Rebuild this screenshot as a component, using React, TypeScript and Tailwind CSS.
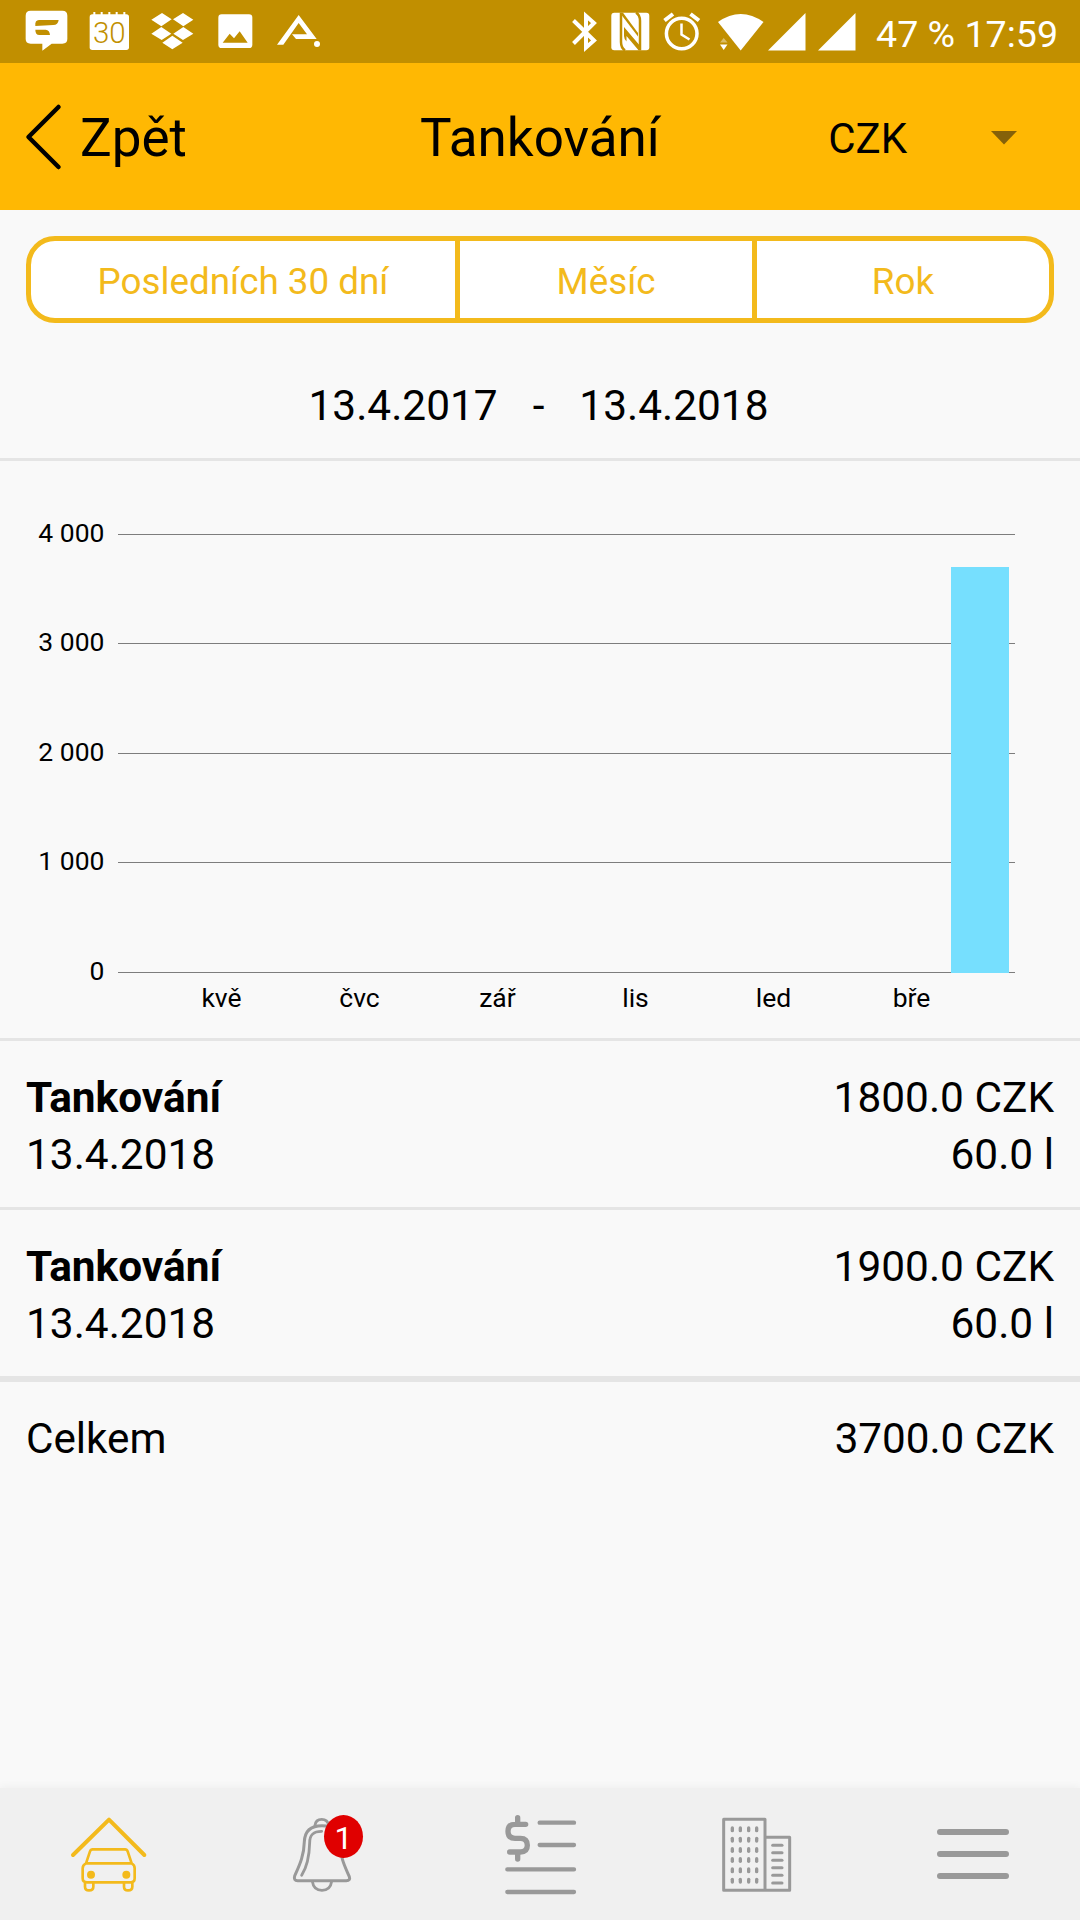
import type { ReactNode } from "react";
import clsx from "clsx";

interface Refuel {
  id: number;
  title: string;
  date: string;
  price: string;
  amount: string;
}

const REFUELS: Refuel[] = [
  { id: 1, title: "Tankování", date: "13.4.2018", price: "1800.0 CZK", amount: "60.0 l" },
  { id: 2, title: "Tankování", date: "13.4.2018", price: "1900.0 CZK", amount: "60.0 l" },
];

const RANGES = [
  { label: "Posledních 30 dní", className: "w-[429px] border-r-5" },
  { label: "Měsíc", className: "w-[297px] border-r-5" },
  { label: "Rok", className: "flex-1" },
];

const Y_TICKS = [
  { label: "4 000", y: 73 },
  { label: "3 000", y: 182 },
  { label: "2 000", y: 292 },
  { label: "1 000", y: 401 },
  { label: "0", y: 511 },
];

// one column per month, every second one is labelled
const MONTHS = ["", "kvě", "", "čvc", "", "zář", "", "lis", "", "led", "", "bře", ""];
const VALUES = [0, 0, 0, 0, 0, 0, 0, 0, 0, 0, 0, 0, 3700];

const PLOT_LEFT = 118;
const PLOT_BOTTOM = 512;
const COL_WIDTH = 69;

function StatusBar() {
  return (
    <div className="flex h-[63px] items-center bg-[#c18f00] pl-[25px] pr-[22px] text-white">
      <div className="flex gap-[21px]">
        {/* Message */}
        <svg className="h-[63px] w-[43px]" viewBox="75 0 129 189" fill="currentColor">
          <path d="M92 32H187Q202 32 202 47V117Q202 131 187 131H155L127 152V131H92Q77 131 77 117V47Q77 32 92 32Z" />
          <path d="M117 60H176Q174 75 160 75L106 78Q104 60 117 60ZM106 89H137Q149 90 150 105H118Q106 105 106 89Z" fill="#c18f00" />
        </svg>
        {/* Calendar */}
        <svg className="h-[63px] w-[41px]" viewBox="267 0 123 189" fill="currentColor">
          <path d="M277 43H379Q387 43 387 51V142Q387 150 379 150H277Q269 150 269 142V51Q269 43 277 43Z" />
          <path d="M283 36V46M305 36V46M328 36V46M350 36V46M373 36V46" stroke="currentColor" strokeWidth="6" />
          <text x="328" y="130" textAnchor="middle" fontSize="87" fontWeight="300" textLength="98" lengthAdjust="spacingAndGlyphs" fill="#c18f00" className="font-['Roboto',sans-serif]">
            30
          </text>
        </svg>
        {/* Dropbox */}
        <svg className="h-[63px] w-[43px]" viewBox="453 0 129 189" fill="currentColor">
          <path d="M486 39L515 58L484 79L454 59ZM549 39L580 59L550 79L519 58ZM484 81L514 101L485 120L454 101ZM550 81L580 101L549 120L520 101ZM517 107L548 128L517 148L487 128Z" />
        </svg>
        {/* Picture */}
        <svg className="h-[63px] w-[40px]" viewBox="645 0 120 189" fill="currentColor">
          <rect x="655" y="43" width="102" height="101" rx="10" />
          <path d="M668 128L689 101L702 115L719 94L743 128Z" fill="#c18f00" />
        </svg>
        <svg className="h-[63px] w-[45px]" viewBox="828 0 135 189" fill="currentColor">
          <path d="M896 45L950 117H888L876 103H921L896 69L850 134H831Z" />
          <circle cx="951" cy="132" r="9" />
        </svg>
      </div>

      <div className="ml-auto flex items-center">
        {/* Bluetooth */}
        <svg className="h-[63px] w-[27px]" viewBox="571 0 27 63" fill="none" stroke="currentColor" strokeWidth="4">
          <path d="M573.5 20.5L594 40.500L586 47.500V16L594 23L573.5 43.500" />
        </svg>
        {/* NFC */}
        <svg className="ml-[13px] h-[63px] w-[39px]" viewBox="611 0 39 63">
          <rect x="611.3" y="12.700" width="38" height="37.600" rx="3" fill="currentColor" />
          <path d="M621 12.700V42Q621 48 625 50.300M636 12.700Q640 15 640 21V50.300" fill="none" stroke="#c18f00" strokeWidth="2.500" />
          <path d="M619.800 12.700H623L638 33V36.500Z" fill="#c18f00" />
          <path d="M624 27L641 47V50.300H638.500L626.500 36V41.500Q624 39 624 36Z" fill="#c18f00" />
        </svg>
        {/* Alarm */}
        <svg className="ml-[13px] h-[63px] w-[38px]" viewBox="663 0 38 63" fill="none" stroke="currentColor">
          <circle cx="681.700" cy="33.500" r="15.300" strokeWidth="3.500" />
          <path d="M664.500 20.500L673 14M699 20.500L690.500 14" strokeWidth="4" />
          <path d="M681.500 23.500V34.500L689.500 39.500" strokeWidth="2.500" />
        </svg>
        {/* Wi-Fi */}
        <svg className="ml-[16px] h-[63px] w-[47px]" viewBox="717 0 47 63" fill="currentColor">
          <path d="M718 22Q740.700 6 763.500 22L740.700 50.500Z" />
          <path d="M720 44.500H727.500L723.700 50Z" />
          <path d="M720 42.500H727.500L723.700 38Z" opacity="0.4" />
        </svg>
        {/* Signal, both SIM slots */}
        <svg className="ml-[4px] h-[63px] w-[38px]" viewBox="768 0 38 63" fill="currentColor">
          <path d="M768 50.500L805.500 13V50.500Z" />
        </svg>
        <svg className="ml-[12px] h-[63px] w-[38px]" viewBox="818 0 38 63" fill="currentColor">
          <path d="M818 50.500L855.500 13V50.500Z" />
        </svg>
        <span className="ml-[20px] pt-[4px] text-[37.6px] leading-[60px]">47 % 17:59</span>
      </div>
    </div>
  );
}

function Header() {
  return (
    <header className="grid h-[147px] grid-cols-[1fr_auto_1fr] items-center bg-[#ffb803] pt-[5px] text-black">
      <div className="flex items-center">
        <svg className="ml-[24px] h-[72px] w-[40px]" viewBox="24 103 40 72" fill="none" stroke="currentColor" strokeWidth="4.500" strokeLinecap="round" strokeLinejoin="round">
          <path d="M58.500 107L28.500 137L58.500 167" />
        </svg>
        <span className="ml-[16px] text-[53px]">Zpět</span>
      </div>
      <h1 className="text-[53px]">Tankování</h1>
      <div className="flex items-center justify-end gap-[84px] pr-[63px]">
        <span className="pb-[2px] text-[42px]">CZK</span>
        <svg className="mb-[3px] h-[14px] w-[26px]" viewBox="0 0 26 14" fill="#856109">
          <path d="M0 0H26L13 13.500Z" />
        </svg>
      </div>
    </header>
  );
}

function Chart() {
  return (
    <svg className="block h-[577px] w-full" viewBox="0 0 1080 577" fontSize="26.500">
      {Y_TICKS.map((tick) => (
        <g key={tick.label}>
          <text x="104.500" y={tick.y + 8} textAnchor="end">
            {tick.label}
          </text>
          <rect x={PLOT_LEFT} y={tick.y} width={897} height={1} fill="#7d7d7d" />
        </g>
      ))}
      {VALUES.map((value, i) => {
        const height = Math.round((value / 4000) * 438);
        return (
          value > 0 && (
            <rect key={i} x={PLOT_LEFT + i * COL_WIDTH + 5} y={PLOT_BOTTOM - height - 1} width={58} height={height + 1} fill="#76dffe" />
          )
        );
      })}
      {MONTHS.map((month, i) => (
        <text key={i} x={PLOT_LEFT + (i + 0.5) * COL_WIDTH} y={545.5} textAnchor="middle">
          {month}
        </text>
      ))}
    </svg>
  );
}

function RefuelRow({ refuel, last }: { refuel: Refuel; last: boolean }) {
  return (
    <li
      className={clsx(
        "flex justify-between border-[#e5e5e5] px-[26px] pb-[24px] pt-[28px] text-[42.4px] leading-[57px]",
        last ? "border-b-6" : "border-b-3"
      )}
    >
      <div>
        <div className="font-bold">{refuel.title}</div>
        <div>{refuel.date}</div>
      </div>
      <div className="text-right">
        <div>{refuel.price}</div>
        <div>{refuel.amount}</div>
      </div>
    </li>
  );
}

function NavItem({ viewBox, active, badge, children }: { viewBox: string; active?: boolean; badge?: number; children: ReactNode }) {
  return (
    <div className="flex flex-1 justify-center">
      <div className={clsx("relative size-[80px]", active ? "text-[#f3ba1c]" : "text-[#999999]")}>
        <svg className="size-full" viewBox={viewBox} fill="none" stroke="currentColor" strokeLinecap="round" strokeLinejoin="round">
          {children}
        </svg>
        {badge && (
          <span className="absolute left-[40px] top-0 flex h-[43px] w-[39px] items-center justify-center rounded-[50%] bg-[#e00000] pt-[2px] text-[32px] leading-none text-white">
            {badge}
          </span>
        )}
      </div>
    </div>
  );
}

const WINDOW_ROWS = [178, 209, 240, 270, 301, 332];
const WINDOW_COLS = [817, 841, 866, 890];
const SLAT_ROWS = [226, 248, 271, 293, 316, 339];

function BottomNav() {
  return (
    <nav className="flex h-[132px] bg-[#f0f0f0] pt-[27px] shadow-[0_-2px_8px_rgba(0,0,0,0.04)]">
      {/* Garage */}
      <NavItem viewBox="84 135 240 240" active>
        <path d="M99 255L207 149L313 255" strokeWidth="12" />
        <g strokeWidth="8">
          <path d="M138 280L150 244Q152 238 158 238H255Q261 238 263 244L275 280M138 280H275Q284 285 284 295V325Q284 337 272 337H141Q128 337 128 325V295Q128 285 138 280Z" />
          <path d="M135 339V350Q135 361 147 361Q160 361 160 350V339M252 339V350Q252 361 264 361Q277 361 277 350V339" />
        </g>
        <circle cx="153" cy="314" r="9" fill="currentColor" strokeWidth="6" />
        <circle cx="259" cy="314" r="9" fill="currentColor" strokeWidth="6" />
      </NavItem>
      {/* Notifications */}
      <NavItem viewBox="732 135 240 240" badge={1}>
        <path d="M846 167C806 167 794 188 793 215C792 260 776 290 764 318Q760 332 773 332H919Q932 332 928 320C915 290 901 265 899 215C898 188 886 167 846 167Z" strokeWidth="9" />
        <path d="M845 184C818 184 809 196 809 218C808 262 798 295 785 316M825 166Q827 148 845 148Q863 148 866 166M817 334Q821 361 846 361Q871 361 875 334" strokeWidth="8.500" />
      </NavItem>
      {/* Costs */}
      <NavItem viewBox="120 135 240 240">
        <path d="M173 143V160M173 250V267M197 163H165Q144 163 144 184Q144 205 165 205H181Q202 205 202 226Q202 246 181 246H149" strokeWidth="16" />
        <path d="M239 158H342M239 225H342M142 298H342M142 366H342" strokeWidth="13" />
      </NavItem>
      {/* Company */}
      <NavItem viewBox="768 135 240 240">
        <path d="M791 148H915V361H791ZM915 202H989V361H915" strokeWidth="9" />
        {WINDOW_ROWS.map((y) =>
          WINDOW_COLS.map((x) => <path key={`${x}-${y}`} d={`M${x} ${y - 4}V${y + 4}`} strokeWidth="10" />)
        )}
        {SLAT_ROWS.map((y) => (
          <path key={y} d={`M938 ${y}H966`} strokeWidth="9" />
        ))}
      </NavItem>
      {/* Menu */}
      <NavItem viewBox="156 135 240 240">
        <path d="M180 186H378M180 252H378M180 318H378" strokeWidth="18" />
      </NavItem>
    </nav>
  );
}

export default function App() {
  return (
    <div className="flex h-[1920px] w-[1080px] flex-col overflow-hidden bg-[#f9f9f9] font-['Roboto',sans-serif] text-black">
      <StatusBar />
      <Header />

      {/* Range switch */}
      <div className="mx-[26px] mt-[26px] flex h-[87px] rounded-[29px] border-5 border-[#f3ba1c] bg-white text-[36.8px] text-[#f3ba1c]">
        {RANGES.map((range) => (
          <button key={range.label} className={clsx("border-[#f3ba1c] pt-[5px]", range.className)}>
            {range.label}
          </button>
        ))}
      </div>

      <div className="flex justify-center gap-[35px] border-b-3 border-[#e5e5e5] pb-[27px] pr-[3px] pt-[58px] text-[42.4px] leading-[50px]">
        <span>13.4.2017</span>
        <span>-</span>
        <span>13.4.2018</span>
      </div>

      <div className="border-b-3 border-[#e5e5e5]">
        <Chart />
      </div>

      <ul>
        {REFUELS.map((refuel, i) => (
          <RefuelRow key={refuel.id} refuel={refuel} last={i === REFUELS.length - 1} />
        ))}
      </ul>

      <div className="flex flex-1 justify-between px-[26px] pt-[28px] text-[42.2px] leading-[57px]">
        <span>Celkem</span>
        <span>3700.0 CZK</span>
      </div>

      <BottomNav />
    </div>
  );
}
